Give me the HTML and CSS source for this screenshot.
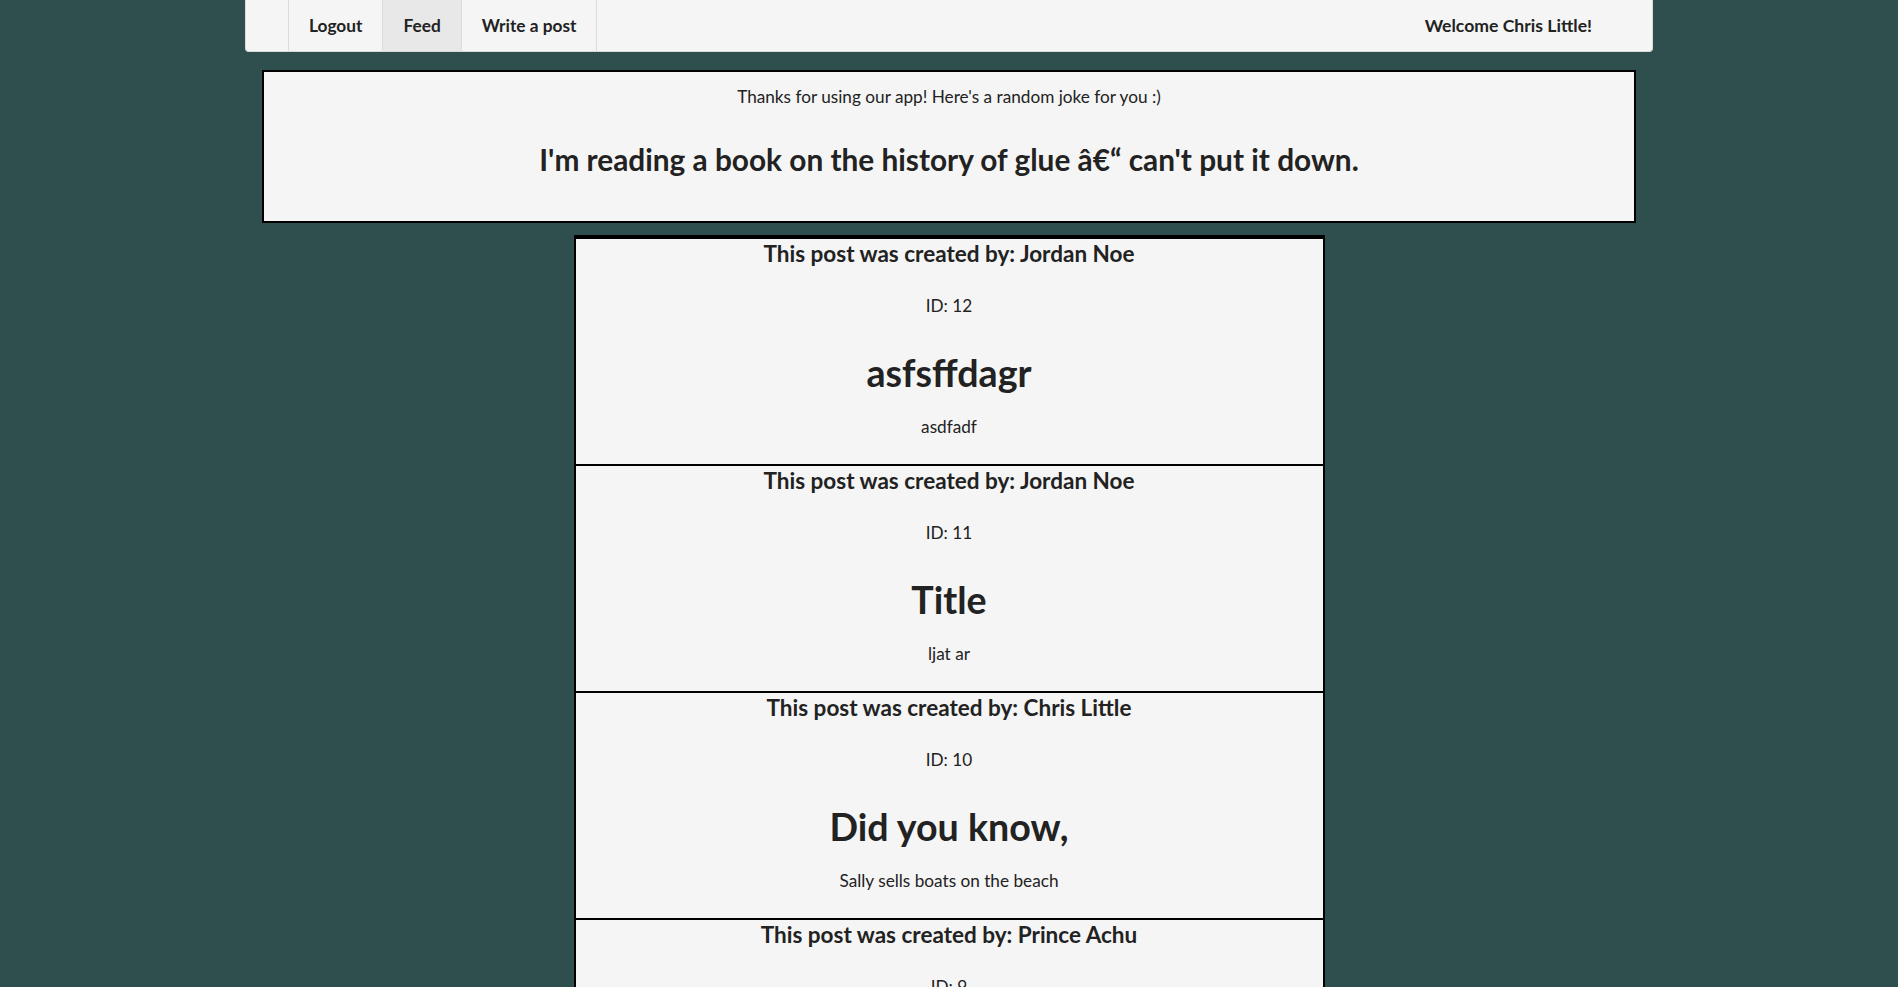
FILE: index.html
```html
<!DOCTYPE html>
<html lang="en">
<head>
<meta charset="utf-8">
<title>Feed</title>
<link rel="stylesheet" href="styles.css">
</head>
<body>
<nav class="navbar">
  <div class="nav-spacer"></div>
  <ul class="nav-items">
    <li class="nav-item">Logout</li>
    <li class="nav-item active">Feed</li>
    <li class="nav-item">Write a post</li>
  </ul>
  <div class="nav-welcome">Welcome Chris Little!</div>
</nav>

<section class="joke-box">
  <p class="joke-intro">Thanks for using our app! Here's a random joke for you :)</p>
  <h2 class="joke-text">I'm reading a book on the history of glue â€“ can't put it down.</h2>
</section>

<main class="post-list">
  <article class="post">
    <h3 class="post-author">This post was created by: Jordan Noe</h3>
    <p class="post-id">ID: 12</p>
    <h1 class="post-title">asfsffdagr</h1>
    <p class="post-body">asdfadf</p>
  </article>
  <article class="post">
    <h3 class="post-author">This post was created by: Jordan Noe</h3>
    <p class="post-id">ID: 11</p>
    <h1 class="post-title">Title</h1>
    <p class="post-body">ljat ar</p>
  </article>
  <article class="post">
    <h3 class="post-author">This post was created by: Chris Little</h3>
    <p class="post-id">ID: 10</p>
    <h1 class="post-title">Did you know,</h1>
    <p class="post-body">Sally sells boats on the beach</p>
  </article>
  <article class="post">
    <h3 class="post-author">This post was created by: Prince Achu</h3>
    <p class="post-id">ID: 9</p>
    <h1 class="post-title">Hello</h1>
    <p class="post-body">First post</p>
  </article>
</main>
</body>
</html>
```

FILE: styles.css
```css
* { box-sizing: border-box; }

html, body {
  margin: 0;
  padding: 0;
}

body {
  background: #2f4f4f;
  font-family: Lato, "Open Sans", sans-serif;
  color: #222;
}

.navbar {
  width: 1408px;
  height: 52px;
  margin: 0 auto;
  display: flex;
  align-items: stretch;
  background: #f5f5f5;
  border: 1px solid #d9d9d9;
  border-top-width: 0;
  border-radius: 0 0 4px 4px;
}

.nav-spacer {
  width: 42px;
}

.nav-items {
  list-style: none;
  margin: 0;
  padding: 0;
  display: flex;
}

.nav-item {
  display: flex;
  align-items: center;
  padding: 0 20px;
  border-left: 1px solid #dcdcdc;
  font-size: 17.3px;
  font-weight: 700;
  color: #222;
}

.nav-item:last-child {
  border-right: 1px solid #dcdcdc;
}

.nav-item.active {
  background: #e8e8e8;
}

.nav-welcome {
  margin-left: auto;
  margin-right: 60px;
  display: flex;
  align-items: center;
  font-size: 17.6px;
  font-weight: 700;
}

.joke-box {
  width: 1374px;
  margin: 18px auto 0;
  background: #f5f5f5;
  border: 2px solid #000;
  padding: 15px 0 45px;
  text-align: center;
}

.joke-intro {
  margin: 0;
  font-size: 17.2px;
  line-height: 20px;
}

.joke-text {
  margin: 37px 0 0;
  font-size: 29.8px;
  line-height: 32px;
  font-weight: 700;
}

.post-list {
  width: 751px;
  margin: 12px auto 0;
  border-top: 2px solid #000;
  border-left: 2px solid #000;
  border-right: 2px solid #000;
  background: #f5f5f5;
}

.post {
  border-top: 2px solid #000;
  padding: 2px 0 28px;
  text-align: center;
  height: 227px;
}

.post-author {
  margin: 0;
  font-size: 22.5px;
  line-height: 26px;
  font-weight: 700;
}

.post-id {
  margin: 29px 0 0;
  font-size: 17.2px;
  line-height: 20px;
}

.post-title {
  margin: 37px 0 0;
  font-size: 37.6px;
  line-height: 40px;
  font-weight: 700;
}

.post-body {
  margin: 24px 0 0;
  font-size: 17.2px;
  line-height: 20px;
}
```
